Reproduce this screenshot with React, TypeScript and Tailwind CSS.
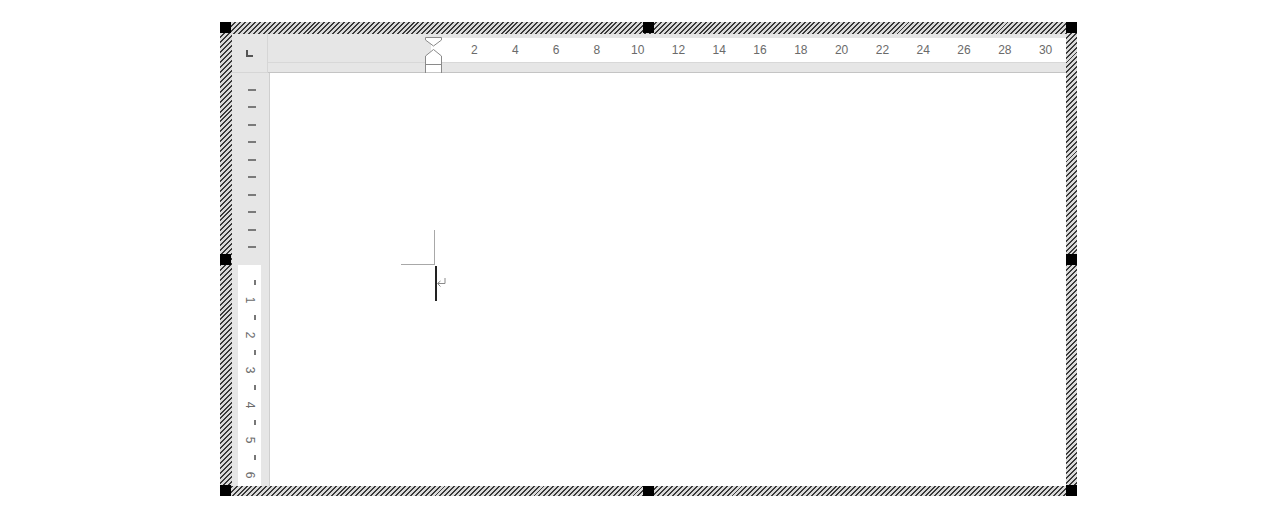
import React from "react";

const hatch =
  "bg-[repeating-linear-gradient(135deg,#3a3a3a_0px,#3a3a3a_1.4px,#dadada_1.4px,#dadada_3.5px)]";

function Handle({ cls }: { cls: string }) {
  return <div className={`absolute w-[11px] h-[11px] bg-black ${cls}`} />;
}

export default function App() {
  const hNums = [2, 4, 6, 8, 10, 12, 14, 16, 18, 20, 22, 24, 26, 28, 30];
  const vItems: (number | null)[] = [null, 1, null, 2, null, 3, null, 4, null, 5, null, 6];
  const topH = ["h-[17px]", "h-[18px]"];
  return (
    <div
      className="w-[1280px] h-[518px] bg-white pt-[22px] pl-[220px]"
      style={{ fontFamily: '"Liberation Sans", Arial, sans-serif' }}
    >
      <div className={`relative w-[857px] h-[474px] pt-[12px] pl-[12px] pr-[11px] pb-[10px] ${hatch}`}>
        <Handle cls="left-0 top-0" />
        <Handle cls="left-[423px] top-0" />
        <Handle cls="left-[846px] top-0" />
        <Handle cls="left-0 top-[232px]" />
        <Handle cls="left-[846px] top-[232px]" />
        <Handle cls="left-0 top-[463px]" />
        <Handle cls="left-[423px] top-[463px]" />
        <Handle cls="left-[846px] top-[463px]" />

        <div className="flex flex-col w-full h-full bg-white">
          {/* top row */}
          <div className="flex h-[39px] shrink-0">
            <div className="w-[38px] h-full bg-[#e6e6e6] border-r border-b border-[#d6d6d6] flex items-center justify-center">
              <div className="w-[7px] h-[7px] border-l-2 border-b-2 border-[#555] mt-[1px]" />
            </div>
            <div className="relative flex-1 flex flex-col bg-[#e6e6e6] border-b border-[#c4c4c4]">
              <div className="h-[4px]" />
              <div className="flex h-[24px]">
                <div className="w-[163px]" />
                <div className="flex-1 bg-white flex items-center pl-[22.6px] text-[12px] text-[#6a6a6a]">
                  {hNums.map((n) => (
                    <div key={n} className="w-[40.8px] shrink-0 text-center leading-none">
                      {n}
                    </div>
                  ))}
                </div>
              </div>
              <div className="flex-1 border-t border-[#d8d8d8]" />
              <svg
                className="absolute left-[156px] top-[2px]"
                width="19"
                height="38"
                viewBox="0 0 19 38"
              >
                <path
                  d="M1.5 1.5 H17.5 V4 L9.5 10 L1.5 4 Z"
                  fill="#fff"
                  stroke="#8a8a8a"
                  strokeWidth="1"
                />
                <path
                  d="M9.5 13.5 L17.5 20 V28.5 H1.5 V20 Z"
                  fill="#fff"
                  stroke="#8a8a8a"
                  strokeWidth="1"
                />
                <rect x="1.5" y="28.5" width="16" height="8.5" fill="#fff" stroke="#8a8a8a" strokeWidth="1" />
              </svg>
            </div>
          </div>
          {/* body */}
          <div className="flex flex-1 min-h-0">
            <div className="w-[38px] h-full bg-[#e6e6e6] border-r border-[#cfcfcf] flex flex-col">
              <div className="h-[192px] flex flex-col justify-end pb-[9px]">
                {Array.from({ length: 10 }).map((_, i) => (
                  <div key={i} className={`${topH[i % 2]} flex items-center justify-center`}>
                    <div className="w-[8px] h-[2px] bg-[#7a7a7a] ml-[3px]" />
                  </div>
                ))}
              </div>
              <div className="flex-1 ml-[6px] mr-[8px] bg-white pt-[9px] flex flex-col">
                {vItems.map((n, i) => (
                  <div key={i} className={`${topH[i % 2]} flex items-center justify-center`}>
                    {n === null ? (
                      <div className="w-[2px] h-[5px] bg-[#777] ml-[10px]" />
                    ) : (
                      <div className="rotate-90 text-[12px] leading-none text-[#6a6a6a] ml-[2px]">{n}</div>
                    )}
                  </div>
                ))}
              </div>
            </div>
            <div className="relative flex-1 bg-white">
              {/* crop mark */}
              <div className="absolute left-[131px] top-[157px] w-[34px] h-[35px] border-r border-b border-[#a8a8a8]" />
              {/* cursor */}
              <div className="absolute left-[165px] top-[193px] w-[2px] h-[35px] bg-[#222]" />
              <svg className="absolute left-[166px] top-[204px]" width="12" height="14" viewBox="0 0 12 14">
                <path d="M9 1 V6.5 H2" fill="none" stroke="#8a8a8a" strokeWidth="1" />
                <path d="M4.5 4 L1.5 6.5 L4.5 9.5" fill="none" stroke="#8a8a8a" strokeWidth="1" />
              </svg>
            </div>
          </div>
        </div>
      </div>
    </div>
  );
}
